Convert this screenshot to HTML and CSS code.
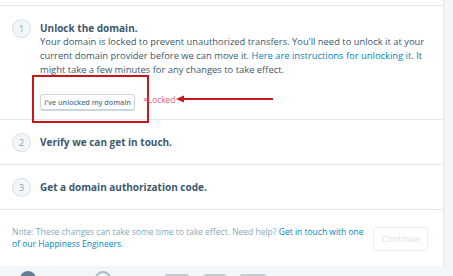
FILE: index.html
```html
<!DOCTYPE html>
<html lang="en">
	<head>
		<meta charset="UTF-8" />
		<meta name="viewport" content="width=device-width, initial-scale=1.0" />
		<title>Transfer domain</title>
		<link rel="stylesheet" href="styles.css">
	</head>
	<body>
		<div class="layout">
			<div class="card">
				<div class="step step-top"></div>
				<div class="step step-open">
					<span class="step-num">1</span>
					<div class="step-body">
						<h3>Unlock the domain.</h3>
						<p class="step-text">
							Your domain is locked to prevent unauthorized transfers. You'll need to unlock it at your<br>
							current domain provider before we can move it. <a href="#">Here are instructions for unlocking it</a>. It<br>
							might take a few minutes for any changes to take effect.
						</p>
						<div class="step-actions">
							<div class="callout">
								<button class="btn">I've unlocked my domain</button>
							</div>
							<span class="status">&times;Locked</span>
							<svg class="arrow" width="98" height="8" viewBox="0 0 98 8">
								<polygon points="0,4 8,0.5 8,7.5" fill="#c8161d" />
								<line x1="7" y1="4" x2="97" y2="4" stroke="#c8161d" stroke-width="1.8" />
							</svg>
						</div>
					</div>
				</div>
				<div class="step">
					<span class="step-num">2</span>
					<h3>Verify we can get in touch.</h3>
				</div>
				<div class="step">
					<span class="step-num">3</span>
					<h3>Get a domain authorization code.</h3>
				</div>
				<div class="card-footer">
					<p class="note">
						Note: These changes can take some time to take effect. Need help? <a href="#">Get in touch with one<br>
						of our Happiness Engineers</a>.
					</p>
					<button class="btn btn-continue" disabled>Continue</button>
				</div>
			</div>
			<div class="dock">
				<span class="dock-item dock-avatar"></span>
				<span class="dock-item dock-dot"></span>
				<span class="dock-item dock-ring"></span>
				<span class="dock-item dock-box first"></span>
				<span class="dock-item dock-box"></span>
				<span class="dock-item dock-box wide"></span>
				<span class="dock-item dock-dot last"></span>
			</div>
		</div>
	</body>
</html>
```

FILE: styles.css
```css
* {
	margin: 0;
	padding: 0;
	box-sizing: border-box;
}
html,
body {
	height: 100%;
	overflow: hidden;
}
body {
	font-family: "Open Sans", "Noto Sans", sans-serif;
	background-color: #f3f6f8;
	color: #4f6b80;
}
a {
	color: #0087be;
	text-decoration: none;
}
.layout {
	display: flex;
	flex-direction: column;
}
.card {
	width: 444px;
	background-color: #fff;
	border-right: 1px solid #e1e8ed;
}
.step {
	display: flex;
	align-items: center;
	gap: 9px;
	padding: 0 12px;
	height: 45px;
	border-bottom: 1px solid #e1e8ed;
}
.step-top {
	height: 6px;
}
.step-open {
	align-items: flex-start;
	height: 114px;
	padding-top: 13px;
}
.step-num {
	flex: none;
	width: 19px;
	height: 19px;
	border: 1px solid #d3e0e8;
	border-radius: 50%;
	background-color: #f3f6f8;
	color: #87a6bc;
	font-size: 9.5px;
	display: flex;
	justify-content: center;
	align-items: center;
}
.step h3 {
	font-size: 10px;
	font-weight: 700;
	color: #3d596d;
	line-height: 14px;
}
.step-open h3 {
	margin-top: 2px;
}
.step-text {
	font-size: 9.4px;
	line-height: 14px;
	color: #3d596d;
	white-space: nowrap;
}
.step-actions {
	display: flex;
	align-items: center;
	margin: -2px 0 0 -8px;
}
.callout {
	border: 2px solid #c8161d;
	padding: 11px 12px 10px 6px;
}
.btn {
	font-family: inherit;
	font-size: 7.2px;
	font-weight: 600;
	color: #537994;
	background-color: #fff;
	border: 1px solid #c8d7e1;
	border-bottom-width: 2px;
	border-radius: 3px;
	height: 17px;
	width: 95px;
	padding: 0;
}
.status {
	color: #e4606d;
	font-size: 8.4px;
	margin-left: -6px;
	margin-top: 1px;
}
.arrow {
	margin-left: 1px;
}
.card-footer {
	display: flex;
	align-items: center;
	justify-content: space-between;
	padding: 0 15px 0 12px;
	height: 56px;
}
.note {
	font-size: 8.5px;
	line-height: 12px;
	color: #87a6bc;
	white-space: nowrap;
}
.note a {
	color: #0087be;
}
.btn-continue {
	width: 55px;
	height: 24px;
	font-size: 8.6px;
	color: #e1e8ed;
	border-color: #e9eff3;
	border-bottom-width: 1px;
	margin-top: 2px;
}
.dock {
	display: flex;
	align-items: flex-start;
	padding: 5px 0 0 20px;
	height: 30px;
}
.dock-item {
	display: block;
	flex: none;
}
.dock-avatar {
	width: 16px;
	height: 16px;
	border-radius: 50%;
	background-color: #5e7f96;
}
.dock-dot {
	width: 4px;
	height: 4px;
	margin: 5px 0 0 36px;
	border-radius: 50%;
	background-color: #a8bece;
}
.dock-ring {
	width: 16px;
	height: 16px;
	margin-left: 19px;
	border-radius: 50%;
	border: 2px solid #a8bece;
}
.dock-box {
	width: 22px;
	height: 14px;
	margin: 3px 0 0 15px;
	border: 2px solid #c3cdd4;
	border-radius: 2px;
}
.dock-box.first {
	width: 24px;
	margin-left: 54px;
}
.dock-box.wide {
	width: 26px;
	margin-left: 14px;
}
.dock-dot.last {
	margin-left: 24px;
}
```
